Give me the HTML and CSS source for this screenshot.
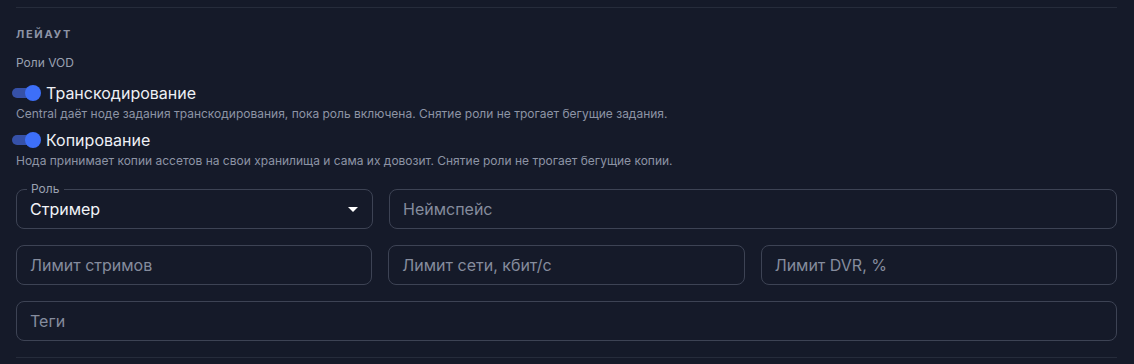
FILE: index.html
```html
<!DOCTYPE html>
<html lang="ru">
<head>
  <meta charset="UTF-8">
  <meta name="viewport" content="width=device-width, initial-scale=1.0">
  <title>Лейаут</title>
  <link rel="stylesheet" href="styles.css">
</head>
<body>
  <div class="section">
    <h3 class="section-title">Лейаут</h3>
    <div class="group-label">Роли VOD</div>

    <div class="role">
      <label class="switch-row">
        <span class="switch on"><span class="thumb"></span></span>
        <span class="switch-label">Транскодирование</span>
      </label>
      <p class="hint">Central даёт ноде задания транскодирования, пока роль включена. Снятие роли не трогает бегущие задания.</p>
    </div>

    <div class="role">
      <label class="switch-row">
        <span class="switch on"><span class="thumb"></span></span>
        <span class="switch-label">Копирование</span>
      </label>
      <p class="hint">Нода принимает копии ассетов на свои хранилища и сама их довозит. Снятие роли не трогает бегущие копии.</p>
    </div>

    <div class="fields">
      <div class="row two">
        <div class="field select">
          <span class="floating">Роль</span>
          <span class="value">Стример</span>
          <svg class="caret" width="10" height="5" viewBox="0 0 10 5"><path d="M0 0h10L5 5z" fill="#fff"/></svg>
        </div>
        <div class="field"><span class="placeholder">Неймспейс</span></div>
      </div>
      <div class="row three">
        <div class="field"><span class="placeholder">Лимит стримов</span></div>
        <div class="field"><span class="placeholder">Лимит сети, кбит/с</span></div>
        <div class="field"><span class="placeholder">Лимит DVR, %</span></div>
      </div>
      <div class="row">
        <div class="field"><span class="placeholder">Теги</span></div>
      </div>
    </div>
  </div>
</body>
</html>
```

FILE: styles.css
```css
body {
  margin: 0;
  background-color: #151a29;
  font-family: Inter, "Noto Sans", sans-serif;
  color: #e8eaf0;
}
.section {
  margin: 7px 17px 0 16px;
  border-top: 1px solid #262c3b;
  border-bottom: 1px solid #262c3b;
  padding: 18px 0 16px;
}
.section-title {
  margin: 0;
  font-size: 11px;
  font-weight: 700;
  letter-spacing: 1.7px;
  text-transform: uppercase;
  color: #8d94a6;
  line-height: 16px;
}
.group-label {
  margin-top: 13px;
  font-size: 12px;
  color: #9aa1b1;
  line-height: 16px;
}
.role {
  margin-top: 10px;
}
.role + .role {
  margin-top: 6px;
}
.switch-row {
  display: flex;
  align-items: center;
  height: 24px;
}
.switch {
  position: relative;
  width: 26px;
  height: 10px;
  margin-left: -4px;
  margin-right: 8px;
  border-radius: 5px;
  background-color: #3651a8;
}
.switch .thumb {
  position: absolute;
  top: -3px;
  right: -3px;
  width: 16px;
  height: 16px;
  border-radius: 50%;
  background-color: #3d6ff8;
}
.switch-label {
  font-size: 16px;
  color: #eef0f5;
}
.hint {
  margin: 1px 0 0;
  font-size: 12px;
  line-height: 16px;
  color: #8d94a5;
}
.fields {
  margin-top: 20px;
  display: flex;
  flex-direction: column;
  gap: 16px;
}
.row {
  display: grid;
  gap: 16px;
}
.row.two {
  grid-template-columns: 357px 1fr;
}
.row.three {
  grid-template-columns: 1fr 1fr 1fr;
}
.field {
  position: relative;
  height: 40px;
  box-sizing: border-box;
  border: 1px solid #3d4354;
  border-radius: 8px;
  display: flex;
  align-items: center;
  padding: 0 13px;
  font-size: 16px;
}
.placeholder {
  color: #858c9d;
}
.floating {
  position: absolute;
  left: 10px;
  top: -9px;
  padding: 0 5px 0 4px;
  background-color: #151a29;
  font-size: 12px;
  line-height: 16px;
  color: #9aa1b1;
}
.value {
  color: #f2f4f8;
  flex: 1;
}
.caret {
  margin-right: 1px;
}
```
